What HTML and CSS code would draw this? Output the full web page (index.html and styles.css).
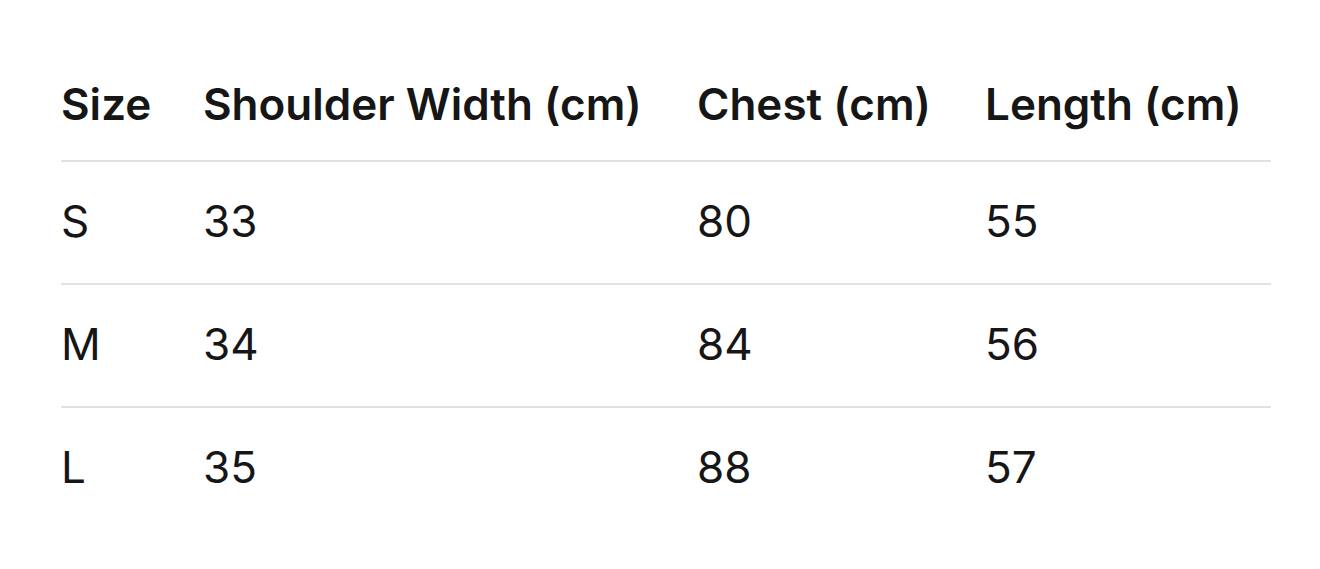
FILE: index.html
```html
<!DOCTYPE html>
<html lang="en">
<head>
<meta charset="utf-8">
<title>Size chart</title>
<link rel="stylesheet" href="styles.css">
</head>
<body>
<div class="wrap">
  <table class="size-table">
    <thead>
      <tr>
        <th class="c-size">Size</th>
        <th class="c-shoulder">Shoulder Width (cm)</th>
        <th class="c-chest">Chest (cm)</th>
        <th class="c-length">Length (cm)</th>
      </tr>
    </thead>
    <tbody>
      <tr><td>S</td><td>33</td><td>80</td><td>55</td></tr>
      <tr><td>M</td><td>34</td><td>84</td><td>56</td></tr>
      <tr><td>L</td><td>35</td><td>88</td><td>57</td></tr>
    </tbody>
  </table>
</div>
</body>
</html>
```
FILE: styles.css
```css
html, body {
  margin: 0;
  padding: 0;
  background: #ffffff;
}
body {
  font-family: Inter, "Liberation Sans", Arial, sans-serif;
  color: #161616;
}
.wrap {
  padding: 43px 49px 0 61px;
}
.size-table {
  width: 1210px;
  border-collapse: collapse;
  table-layout: fixed;
  font-size: 44px;
  line-height: 53px;
}
.c-size { width: 142px; }
.c-shoulder { width: 494px; }
.c-chest { width: 288px; }
.c-length { width: 286px; }
.size-table th {
  text-align: left;
  font-weight: 600;
  padding: 35px 0 29px 0;
  border-bottom: 2px solid #e2e2e2;
  white-space: nowrap;
}
.size-table td {
  padding: 33px 0 35px 0;
  font-weight: 400;
  border-bottom: 2px solid #e2e2e2;
}
.size-table tbody tr:last-child td {
  border-bottom: none;
}
```
